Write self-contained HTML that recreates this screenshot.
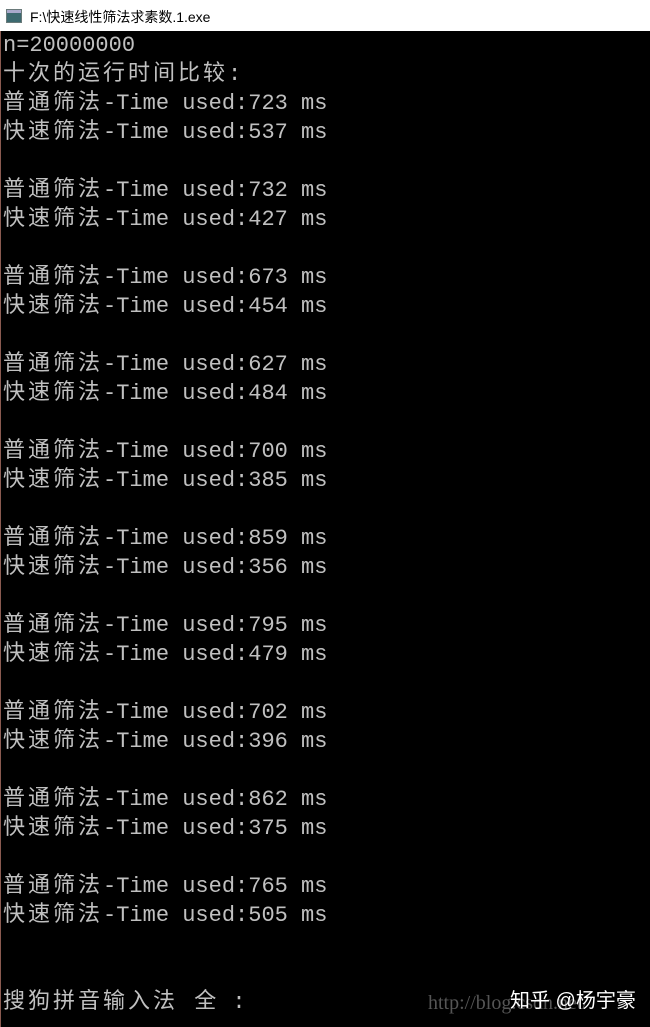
<!DOCTYPE html>
<html><head><meta charset="utf-8"><style>
html,body{margin:0;padding:0;width:650px;height:1027px;overflow:hidden;background:#000;}
#title{position:absolute;left:0;top:0;width:650px;height:31px;background:#fff;font-family:"Liberation Sans","Noto Sans CJK SC",sans-serif;font-size:14px;color:#000;}
#title span{position:absolute;left:30px;top:7px;}
#icon{position:absolute;left:6px;top:9px;width:14px;height:12px;border:1px solid #6a7a7a;background:#3d6a70;}
#icon:after{content:"";position:absolute;left:0;top:0;width:14px;height:3px;background:#aac;}
#lb{position:absolute;left:0;top:31px;width:1px;height:996px;background:#8a5a50;}
#con{position:absolute;left:3px;top:31px;font-family:"Liberation Mono","Noto Sans CJK SC",monospace;font-size:22px;color:#c0c0c0;}
#con div{height:29px;line-height:29px;overflow:visible;white-space:pre;}
#con b{font-weight:normal;letter-spacing:3px;}
#wm{position:absolute;left:428px;top:992px;font-family:"Liberation Serif",serif;font-size:20px;color:#555;}
#zh{position:absolute;left:510px;top:984px;font-family:"Liberation Sans","Noto Sans CJK SC",sans-serif;font-size:20px;color:#fff;}
</style></head><body>
<div id="title"><div id="icon"></div><span>F:\快速线性筛法求素数.1.exe</span></div>
<div id="lb"></div>
<div id="con"><div>n=20000000</div><div><b>十次的运行时间比较</b>:</div><div><b>普通筛法</b>-Time used:723 ms</div><div><b>快速筛法</b>-Time used:537 ms</div><div></div><div><b>普通筛法</b>-Time used:732 ms</div><div><b>快速筛法</b>-Time used:427 ms</div><div></div><div><b>普通筛法</b>-Time used:673 ms</div><div><b>快速筛法</b>-Time used:454 ms</div><div></div><div><b>普通筛法</b>-Time used:627 ms</div><div><b>快速筛法</b>-Time used:484 ms</div><div></div><div><b>普通筛法</b>-Time used:700 ms</div><div><b>快速筛法</b>-Time used:385 ms</div><div></div><div><b>普通筛法</b>-Time used:859 ms</div><div><b>快速筛法</b>-Time used:356 ms</div><div></div><div><b>普通筛法</b>-Time used:795 ms</div><div><b>快速筛法</b>-Time used:479 ms</div><div></div><div><b>普通筛法</b>-Time used:702 ms</div><div><b>快速筛法</b>-Time used:396 ms</div><div></div><div><b>普通筛法</b>-Time used:862 ms</div><div><b>快速筛法</b>-Time used:375 ms</div><div></div><div><b>普通筛法</b>-Time used:765 ms</div><div><b>快速筛法</b>-Time used:505 ms</div><div></div><div></div><div><b>搜狗拼音输入法 全</b> :</div></div>
<div id="wm">http://blog.csdn.net/</div>
<div id="zh">知乎 @杨宇豪</div>
</body></html>
